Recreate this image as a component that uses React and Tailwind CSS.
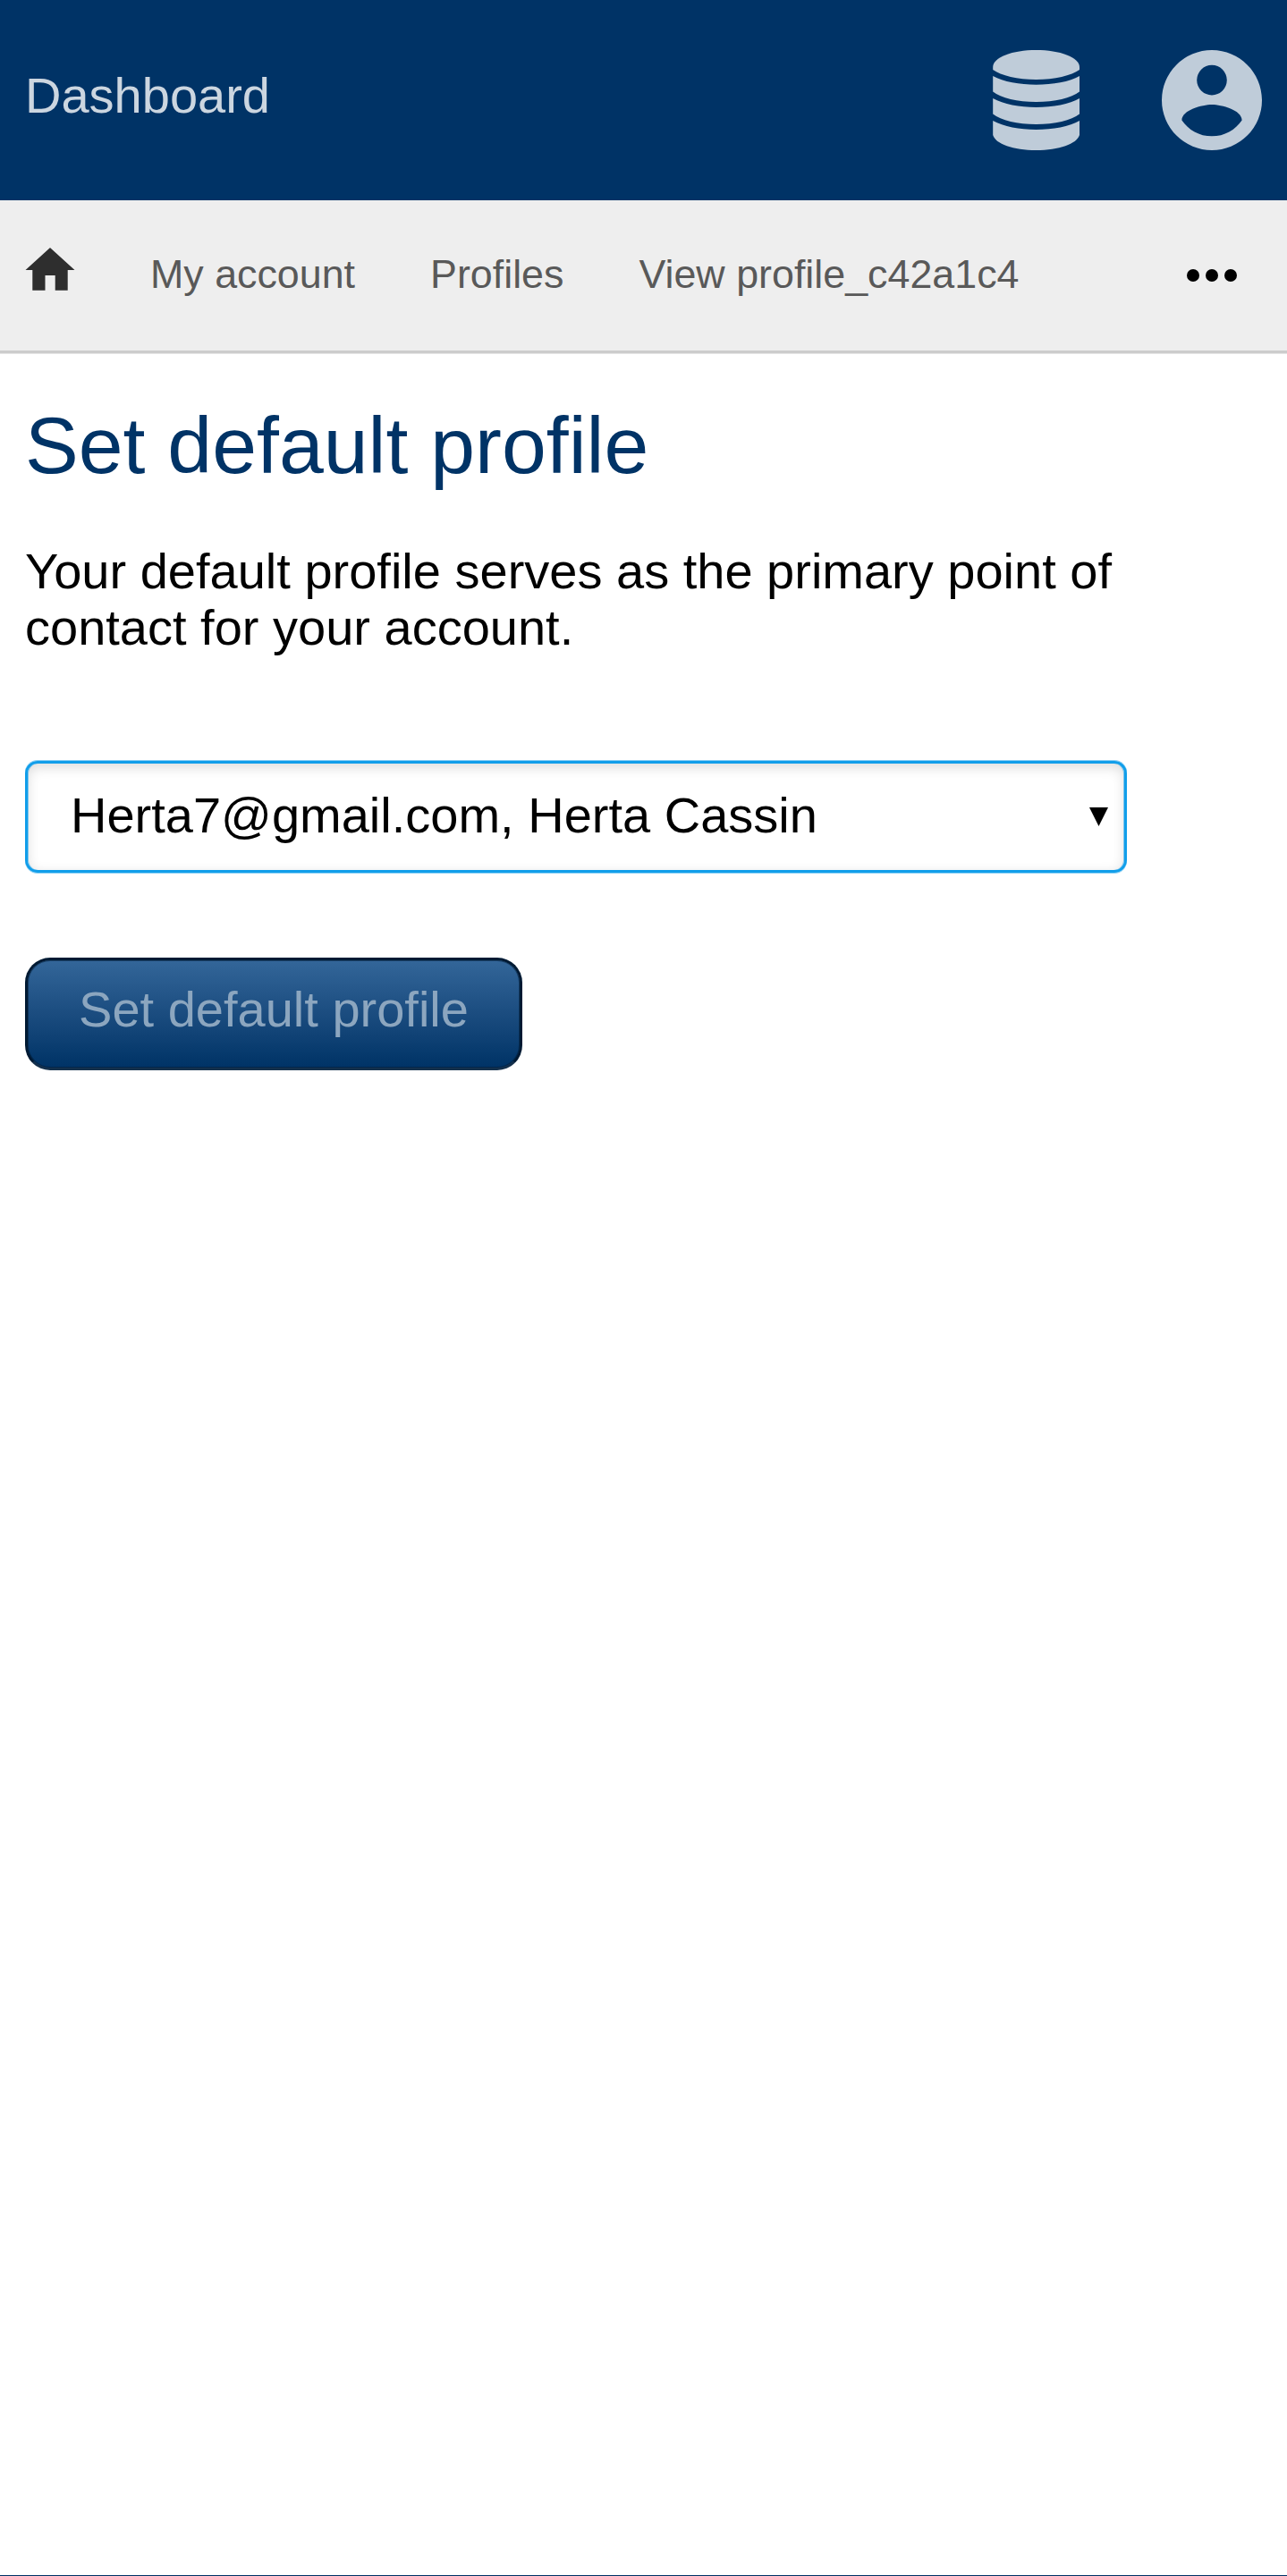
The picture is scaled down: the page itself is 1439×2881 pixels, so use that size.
export default function App() {
  return (
    <div className="flex h-[2881px] w-[1439px] flex-col bg-white font-['Liberation_Sans',sans-serif] text-[56px] leading-[63px] text-black">
      <header className="flex h-[224px] shrink-0 items-center justify-between bg-[#003366] px-[28px]">
        <a className="-mt-[11px] text-[#ccd6e0]">Dashboard</a>
        <div className="flex items-center gap-[91px] text-[#bfccd9]">
          <svg className="h-[112px] w-[98px]" viewBox="0 0 98 112" fill="currentColor">
            <path d="M0.2 19C0.2 8 22 0 48.500 0S97 8 97 19V22C88 28.500 69 33 48.500 33S9 28.500 0.200 22Z" />
            <path d="M0.200 29C12 35.500 30 38.700 48.500 38.700S86 35.500 97 29V46.500C88 53.500 69 58 48.500 58S9 53.500 0.200 46.500Z" />
            <path d="M0.200 54C12 60.500 30 64 48.500 64S86 60.500 97 54V71.500C88 78.500 69 83 48.500 83S9 78.500 0.200 71.500Z" />
            <path d="M0.200 79C12 85.500 30 89 48.500 89S86 85.500 97 79V95C94 105 74 112 48.500 112S3 105 0.200 95Z" />
          </svg>
          <svg className="h-[112px] w-[112px]" viewBox="2 2 20 20" fill="currentColor">
            <path d="M12,19.2C9.5,19.2 7.29,17.92 6,16C6.03,14 10,12.9 12,12.9C14,12.9 17.97,14 18,16C16.71,17.92 14.5,19.2 12,19.2M12,5A3,3 0 0,1 15,8A3,3 0 0,1 12,11A3,3 0 0,1 9,8A3,3 0 0,1 12,5M12,2A10,10 0 0,0 2,12A10,10 0 0,0 12,22A10,10 0 0,0 22,12C22,6.47 17.5,2 12,2Z" />
          </svg>
        </div>
      </header>
      <nav className="flex h-[171px] shrink-0 items-center border-b-[3px] border-[#cccccc] bg-[#eeeeee] pl-[28px] pr-[56px] text-[44.8px] text-[#595959] shadow-[0_1px_0_#e5e5e5]">
        <svg className="-mt-[14px] mr-[84px] h-[48px] w-[56px]" viewBox="0 0 56 48" fill="#2e2e2e">
          <path d="M28 0L55.500 25H47.700V47.700H33.700V31H22.500V47.700H8.300V25H0.500Z" />
        </svg>
        <div className="flex gap-[84px] pb-[4px]">
          <a>My account</a>
          <a>Profiles</a>
          <a>View profile_c42a1c4</a>
        </div>
        <svg className="ml-auto h-[14px] w-[56px]" viewBox="0 0 56 14" fill="#000">
          <circle cx="7" cy="7" r="7" />
          <circle cx="28" cy="7" r="7" />
          <circle cx="49" cy="7" r="7" />
        </svg>
      </nav>
      <main className="flex flex-col items-start px-[28px]">
        <h1 className="mt-[53px] text-[89.6px] leading-[101px] text-[#003366]">Set default profile</h1>
        <p className="mt-[58px] w-[1260px]">
          Your default profile serves as the primary point of contact for your account.
        </p>
        <button className="mt-[118px] flex h-[125px] w-[1232px] items-center justify-between rounded-[14px] border-[3px] border-[#119eea] pl-[48px] pr-[18px] shadow-[0_1px_0_#119eea80,0_-1px_0_#119eea80,inset_1px_0_0_#119eea80,inset_-1px_0_0_#119eea80,inset_0_4px_14px_rgba(0,0,0,0.14)]">
          <span className="pb-[4px]">Herta7@gmail.com, Herta Cassin</span>
          <svg className="h-[21px] w-[21px]" viewBox="0 0 21 21">
            <path d="M0 0H21L10.500 21Z" />
          </svg>
        </button>
        <button className="mt-[95px] flex h-[126px] w-[556px] items-center justify-center rounded-[28px] border-[3px] border-[#001a33] border-b-[#14304c] bg-linear-to-b from-[#336699] to-[#003366] pb-[11px] text-[#8ca6bf] shadow-[inset_0_0_0_1px_#001a3380]">
          Set default profile
        </button>
      </main>
      <div className="mt-auto h-px bg-[#003366]" />
    </div>
  );
}
